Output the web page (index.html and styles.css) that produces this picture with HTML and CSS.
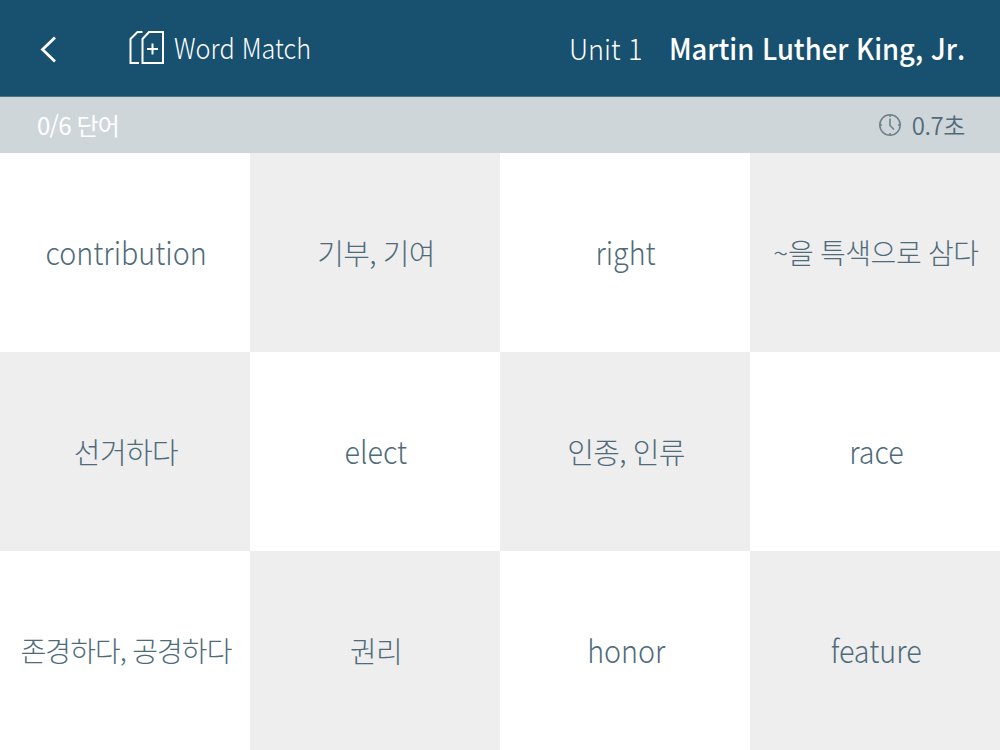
FILE: index.html
```html
<!DOCTYPE html>
<html lang="ko">
<head>
    <meta charset="UTF-8">
    <meta name="viewport" content="width=device-width, initial-scale=1.0">
    <title>Word Match</title>
    <link rel="stylesheet" href="styles.css">
</head>
<body>

    <header class="top-bar">
        <button class="back-btn" type="button" aria-label="Back">
            <svg width="22" height="30" viewBox="0 0 22 30" fill="none" stroke="#fff" stroke-width="2.8">
                <path d="M18 3.5 L5.5 15.5 L18 27.5"/>
            </svg>
        </button>
        <svg class="cards-icon" width="36" height="36" viewBox="0 0 36 36" fill="none" stroke="#fff" stroke-width="2">
            <path d="M14.5 2 H9.5 L2.5 9 V33 H11"/>
            <path d="M21 2 L14.5 9 V33 H35 V2 Z"/>
            <path d="M24.5 13.5 V24.5 M19 19 H30"/>
        </svg>
        <h1 class="app-title">Word Match</h1>
        <span class="unit">Unit 1</span>
        <span class="lesson">Martin Luther King, Jr.</span>
    </header>

    <div class="status-bar">
        <span class="count">0/6 단어</span>
        <span class="timer">
            <svg width="24" height="24" viewBox="0 0 24 24" fill="none" stroke="#6b828e" stroke-width="1.6">
                <circle cx="12" cy="12" r="10.2"/>
                <path d="M12 5.5 V12.5 L16 16.5"/>
                <path d="M12 2 V4 M12 20 V22 M2 12 H4 M20 12 H22"/>
            </svg>
            <span class="time">0.7초</span>
        </span>
    </div>

    <main class="board">
        <div class="card"><span class="en">contribution</span></div>
        <div class="card dark"><span class="ko">기부, 기여</span></div>
        <div class="card"><span class="en">right</span></div>
        <div class="card dark"><span class="ko long">~을 특색으로 삼다</span></div>
        <div class="card dark"><span class="ko">선거하다</span></div>
        <div class="card"><span class="en">elect</span></div>
        <div class="card dark"><span class="ko">인종, 인류</span></div>
        <div class="card"><span class="en">race</span></div>
        <div class="card"><span class="ko tight">존경하다, 공경하다</span></div>
        <div class="card dark"><span class="ko">권리</span></div>
        <div class="card"><span class="en">honor</span></div>
        <div class="card dark"><span class="en">feature</span></div>
    </main>

</body>
</html>
```
FILE: styles.css
```css
* {
    box-sizing: border-box;
}

body {
    margin: 0;
    height: 100vh;
    display: flex;
    flex-direction: column;
    font-family: "Noto Sans CJK KR", sans-serif;
    font-weight: 300;
    color: #4f6b7a;
    overflow: hidden;
}

/* header */
.top-bar {
    display: flex;
    align-items: center;
    height: 97px;
    padding: 0 35px 0 37px;
    background: #18506f;
    border-bottom: 1px solid #4b7289;
    color: #fff;
}

.back-btn {
    display: flex;
    width: 91px;
    padding: 2px 0 0;
    border: none;
    background: none;
}

.app-title {
    margin: 0 auto 0 10px;
    padding-bottom: 4px;
    font-size: 28.5px;
    font-weight: 300;
    transform: scaleX(0.885);
    transform-origin: left;
}

.unit {
    margin-right: 8px;
    padding-bottom: 1px;
    font-size: 28.5px;
    transform: scaleX(0.95);
    transform-origin: right;
}

.lesson {
    padding-bottom: 2px;
    font-size: 29px;
    font-weight: 500;
    transform: scaleX(0.943);
    transform-origin: right;
}

/* progress and timer */
.status-bar {
    display: flex;
    justify-content: space-between;
    align-items: center;
    height: 57px;
    margin-bottom: -1px;
    padding: 0 35px 0 37px;
    background: #cfd6da;
    border-bottom: 1px solid #e6e9eb;
    font-size: 24px;
}

.count {
    padding-bottom: 1px;
    color: #fff;
    font-weight: 400;
    letter-spacing: -0.8px;
}

.timer {
    display: flex;
    align-items: center;
    gap: 10px;
}

.time {
    padding-bottom: 1px;
    font-weight: 350;
    letter-spacing: -0.4px;
}

/* word cards */
.board {
    flex: 1;
    display: grid;
    grid-template-columns: repeat(4, 1fr);
    grid-template-rows: repeat(3, 1fr);
}

.card {
    display: flex;
    justify-content: center;
    align-items: center;
    padding: 0 0 3px 2px;
    white-space: nowrap;
    background: #fff;
}

.card.dark {
    background: #eee;
}

.en {
    font-size: 31px;
    transform: scaleX(0.925);
}

.ko {
    padding-top: 2px;
    font-size: 29px;
    letter-spacing: -0.6px;
    word-spacing: -0.8px;
}

/* longer words are squeezed to fit the card */
.ko.long {
    font-size: 28px;
    letter-spacing: -0.4px;
}

.ko.tight {
    font-size: 28px;
    letter-spacing: -0.9px;
}
```
